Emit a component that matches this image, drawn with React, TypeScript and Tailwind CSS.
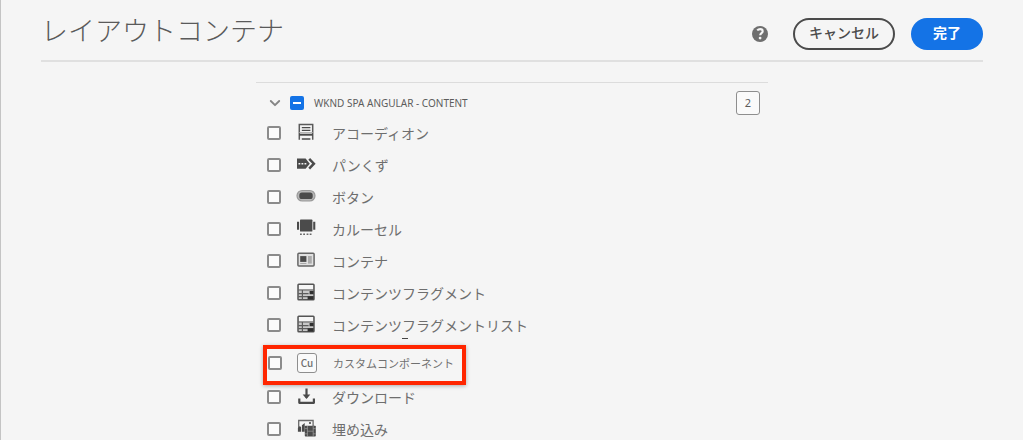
import React, { useEffect, useRef, useState } from "react";
import type { ReactNode } from "react";

const INK = "#4b4b4b";

function IconFrame({ children }: { children: ReactNode }) {
  return (
    <svg aria-hidden="true" className="size-5" viewBox="0 0 20 20" fill="none">
      {children}
    </svg>
  );
}

function AccordionIcon() {
  return (
    <IconFrame>
      <path d="M3.3 17.8V2.4h13.4v15.4" stroke="#5a5a5a" strokeWidth="1.5" />
      <path d="M3 12.7h14" stroke={INK} strokeWidth="2" />
      <path d="M5.8 5.6h8.6M5.8 8.4h8.6M5.8 17h8.6" stroke={INK} strokeWidth="1.4" />
      <path d="M3 10.5h14" stroke="#a5a5a5" strokeWidth="0.8" />
    </IconFrame>
  );
}

function BreadcrumbIcon() {
  return (
    <IconFrame>
      <path d="M1 4.6h8.6l4.2 5.1-4.2 5.1H1z" fill={INK} />
      <path d="M2.5 9.7h1.8M5.5 9.7h1.8M8.5 9.7h1.8" stroke="#f4f4f4" strokeWidth="1.5" />
      <path d="M13.2 4.8 17.9 9.7l-4.7 4.9" stroke={INK} strokeWidth="2.5" />
    </IconFrame>
  );
}

function ButtonIcon() {
  return (
    <IconFrame>
      <rect x="1" y="4.5" width="18" height="10.5" rx="5.2" fill="#b8b8b8" stroke="#9a9a9a" strokeWidth="1.2" />
      <rect x="3.3" y="6.4" width="13.4" height="6.6" rx="2.6" fill={INK} />
    </IconFrame>
  );
}

function CarouselIcon() {
  return (
    <IconFrame>
      <rect x="4" y="1.6" width="12.4" height="12" rx="0.7" fill={INK} />
      <path d="M1 3.8h2.1v8H1zM17.2 3.8h2.1v8h-2.1z" fill={INK} />
      <path d="M4 16.2h1.8M7.2 16.2H9M10.6 16.2h1.8M13.7 16.2h1.8" stroke="#686868" strokeWidth="1.6" />
    </IconFrame>
  );
}

function ContainerIcon() {
  return (
    <IconFrame>
      <rect x="1.9" y="3.3" width="16.2" height="12.8" rx="1" fill="#e0e0e0" stroke="#666666" strokeWidth="1.5" />
      <path d="M4.2 6.1h6.2v5.8H4.2z" fill={INK} />
      <path d="M12 6h3.8v7.6H12z" fill="#ababab" />
      <path d="M4.2 13.5h6.2" stroke="#aaaaaa" />
    </IconFrame>
  );
}

function FragmentIcon() {
  return (
    <IconFrame>
      <rect x="2" y="2.2" width="16" height="15.6" rx="0.8" fill="#c8c8c8" stroke="#555555" strokeWidth="1.5" />
      <path d="M3 3h14v4.3H3z" fill="#f6f6f6" />
      <path d="M2.3 8h15.4M2.3 11.6h10.3M2.3 14.6h15.4M6.4 8v9.6" stroke="#5c5c5c" strokeWidth="1.2" />
      <path d="M13.6 9h4v3.3h-4zM11.6 14.2h6v3.4h-6z" fill="#303030" />
    </IconFrame>
  );
}

function DownloadIcon() {
  return (
    <IconFrame>
      <path d="M10.5 2.4v9M3.3 12.6v4.2h14.6v-4.2" stroke={INK} strokeWidth="2.2" strokeLinejoin="round" />
      <path d="M6.7 8.6h7.6l-3.8 4.5z" fill={INK} />
    </IconFrame>
  );
}

function EmbedIcon() {
  return (
    <IconFrame>
      <path d="M2.7 12V2.5h14.4v6" stroke="#6a6a6a" strokeWidth="1.3" />
      <path d="M1.9 13.8V10l2-2 1.2 1.2v4.6zM5.9 13.8V7.2l2.8-2.3v8.9z" fill={INK} />
      <circle cx="14" cy="5" r="1.1" fill={INK} />
      <rect x="8.8" y="7.8" width="11" height="10.7" rx="0.8" fill={INK} />
      <path d="M11.4 8v10.5M17.2 8v10.5" stroke="#b4b4b4" strokeWidth="0.6" />
      <path d="M8.8 10.6h2.6M11.4 13.2h5.8M8.8 15.8h2.6M17.2 10.6h2.6M17.2 15.8h2.6" stroke="#a8a8a8" strokeWidth="0.6" />
    </IconFrame>
  );
}

function CustomIcon() {
  return (
    <span
      aria-hidden="true"
      className="flex size-5 items-center justify-center rounded-[3px] border border-[#8e8e8e] bg-[#fafafa] text-[10px] leading-none font-medium text-[#6e6e6e]"
    >
      Cu
    </span>
  );
}

type Component = { id: string; label: string; icon: ReactNode; highlighted?: boolean; mark?: boolean };

const COMPONENTS: Component[] = [
  { id: "accordion", label: "アコーディオン", icon: <AccordionIcon /> },
  { id: "breadcrumb", label: "パンくず", icon: <BreadcrumbIcon /> },
  { id: "button", label: "ボタン", icon: <ButtonIcon /> },
  { id: "carousel", label: "カルーセル", icon: <CarouselIcon /> },
  { id: "container", label: "コンテナ", icon: <ContainerIcon /> },
  { id: "fragment", label: "コンテンツフラグメント", icon: <FragmentIcon /> },
  { id: "fragment-list", label: "コンテンツフラグメントリスト", icon: <FragmentIcon />, mark: true },
  { id: "custom", label: "カスタムコンポーネント", icon: <CustomIcon />, highlighted: true },
  { id: "download", label: "ダウンロード", icon: <DownloadIcon /> },
  { id: "embed", label: "埋め込み", icon: <EmbedIcon /> },
];

function ComponentRow({ item }: { item: Component }) {
  return (
    <li
      className={
        item.highlighted
          ? "mt-2 flex h-8 w-fit items-center bg-[#f5f5f5] pr-2 pb-1 pl-px shadow-[0_1px_4px_4px_rgba(0,0,0,0.3)] ring-4 ring-[#ff2600]"
          : "flex h-8 items-center"
      }
    >
      <input
        id={item.id}
        type="checkbox"
        className="size-3.5 shrink-0 appearance-none rounded-[2px] border-2 border-[#8b8b8b] bg-[#fbfbfb] checked:border-[#1473e6] checked:bg-[#1473e6]"
      />
      <label htmlFor={item.id} className="flex items-center">
        <span className={item.highlighted ? "mr-4 ml-[15px]" : "mr-4 ml-[15px] pb-0.5"}>{item.icon}</span>
        <span
          className={
            item.highlighted
              ? "text-[11px] leading-5 whitespace-nowrap text-[#707070]"
              : "relative text-sm leading-5 whitespace-nowrap text-[#6e6e6e]"
          }
        >
          {item.label}
          {item.mark && <span aria-hidden="true" className="absolute -bottom-1 left-[70px] h-px w-1.5 bg-[#444444]" />}
        </span>
      </label>
    </li>
  );
}

export default function App() {
  const groupRef = useRef<HTMLInputElement>(null);
  const [open, setOpen] = useState(true);

  useEffect(() => {
    if (groupRef.current) groupRef.current.indeterminate = true;
  }, []);

  return (
    <main className="min-h-screen border-l border-[#c4c4c4] bg-[#f5f5f5] px-10 font-['Noto_Sans_CJK_JP','Noto_Sans',sans-serif]">
      <header className="flex items-start justify-between border-b-2 border-[#e0e0e0] pb-2.5">
        <h1 className="pt-2.5 text-[27px] leading-10 font-light text-[#5a5a5a]">レイアウトコンテナ</h1>
        <div className="flex items-center pt-[18px]">
          <button type="button" aria-label="ヘルプ" className="mr-[25px]">
            <svg className="size-4" viewBox="0 0 16 16" fill="none">
              <circle cx="8" cy="8" r="8" fill="#6e6e6e" />
              <path
                d="M5.2 4.4C6.1 3.4 7.1 3.1 8.2 3.1c1.6 0 2.5.9 2.5 2.1 0 1.9-2.5 2-2.5 4"
                stroke="#f5f5f5"
                strokeWidth="2.1"
              />
              <circle cx="8.1" cy="12.1" r="1.4" fill="#f5f5f5" />
            </svg>
          </button>
          <button
            type="button"
            className="mr-4 h-8 rounded-full border-2 border-[#4b4b4b] px-3.5 pb-1 text-sm leading-none font-medium text-[#4b4b4b]"
          >
            キャンセル
          </button>
          <button
            type="button"
            className="h-8 rounded-full bg-[#1473e6] px-[22px] pb-1 text-sm leading-none font-bold text-white"
          >
            完了
          </button>
        </div>
      </header>

      <section className="mx-auto mt-5 max-w-lg border-t border-[#dcdcdc]">
        <div className="flex items-center pt-2 pr-2 pb-0.5 pl-[13px]">
          <button type="button" aria-label="グループを開閉" aria-expanded={open} onClick={() => setOpen(!open)}>
            <svg className="h-3 w-3" viewBox="0 0 12 12" fill="none">
              <path d="M1.8 4 6 8.2 10.2 4" stroke="#858585" strokeWidth="1.9" strokeLinecap="round" strokeLinejoin="round" />
            </svg>
          </button>
          <span className="relative ml-[9px] flex">
            <input
              ref={groupRef}
              id="group"
              type="checkbox"
              className="size-3.5 appearance-none rounded-[2px] bg-[#1473e6]"
            />
            <span className="pointer-events-none absolute inset-x-[3px] top-1.5 h-0.5 bg-white" />
          </span>
          <label htmlFor="group" className="ml-2.5 font-['Noto_Sans',sans-serif] text-[10px] leading-6 text-[#5c5c5c]">
            WKND SPA ANGULAR - CONTENT
          </label>
          <output
            htmlFor="group"
            className="ml-auto flex size-6 items-center justify-center rounded-[3px] border border-[#8e8e8e] bg-[#fafafa] font-['Noto_Sans',sans-serif] text-[11px] text-[#5c5c5c]"
          >
            2
          </output>
        </div>
        {open && (
          <ul className="pl-[11px]">
            {COMPONENTS.map((item) => (
              <ComponentRow key={item.id} item={item} />
            ))}
          </ul>
        )}
      </section>
    </main>
  );
}
